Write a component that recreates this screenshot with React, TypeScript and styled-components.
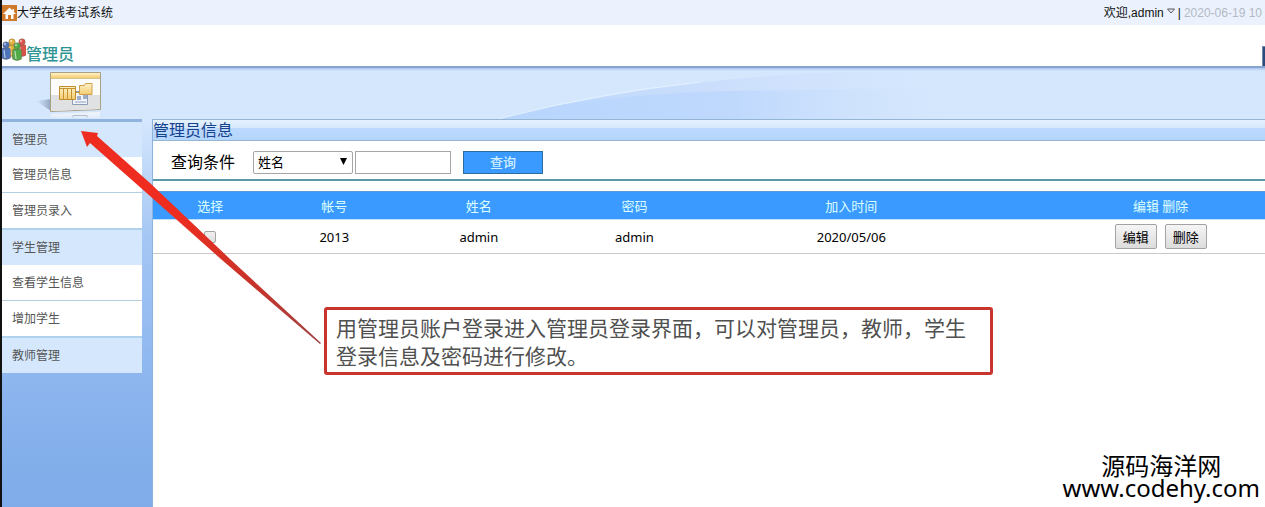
import React from "react";
import styled, { createGlobalStyle, css } from "styled-components";

const GlobalStyle = createGlobalStyle`
  *, *::before, *::after { box-sizing: border-box; }
  body {
    margin: 0;
    overflow: hidden;
    background: #fff;
    color: #111;
    font: 12px/16px "Liberation Sans", "Noto Sans CJK SC", sans-serif;
  }
  button, input, select { font-family: inherit; margin: 0; }
`;

const Page = styled.div`
  position: relative;
  display: flex;
  flex-direction: column;
  min-height: 100vh;
  overflow: hidden;
  border-left: 2px solid #111;
`;

const TitleBar = styled.header`
  display: flex;
  align-items: center;
  justify-content: space-between;
  height: 25px;
  background: #ebf2fd;
  white-space: nowrap;
`;

const Brand = styled.a`
  display: flex;
  align-items: center;
  color: #111;
  text-decoration: none;
`;

const Session = styled.div`
  display: flex;
  align-items: center;
  gap: 3px;
  padding-right: 3px;
`;

const Stamp = styled.time`
  color: #b4b9c4;
`;

const UserMenu = styled.button`
  display: flex;
  align-items: center;
  gap: 3px;
  padding: 0;
  border: 0;
  background: none;
  color: #111;
  font-size: 12px;
  line-height: 16px;
`;

const RoleBar = styled.div`
  display: flex;
  align-items: flex-end;
  justify-content: space-between;
  height: 41px;
  background: #fff;
`;

const RoleTitle = styled.h1`
  display: flex;
  align-items: flex-start;
  height: 28px;
  margin: 0;
  color: #2d9494;
  font-size: 16px;
  line-height: 34px;
  font-weight: 500;
`;

const RoleTab = styled.span`
  width: 3px;
  height: 20px;
  border: solid #7089ad;
  border-width: 1px 0 0 1px;
  background: #2c4a7c;
`;

const Banner = styled.div`
  display: flex;
  justify-content: space-between;
  height: 53px;
  border-top: 2px solid #88a3cf;
  background: linear-gradient(#a9c3ec, #d5e7fd 3px);
`;

const BannerIcon = styled.svg`
  flex: none;
  margin: 3px 0 0 34px;
`;

const Swoosh = styled.svg`
  flex: 1;
  min-width: 0;
  height: 51px;
`;

const Body = styled.div`
  display: flex;
  flex: 1;
`;

const Sidebar = styled.nav`
  flex: none;
  width: 150px;
  padding-right: 10px;
  background: linear-gradient(#d5e7fd, #a4c6f4 120px, #90b8f0 240px, #82aeea 340px, #80acea);
`;

type Line = "thick" | "medium" | "thin" | "none";

const menuLines: Record<Line, ReturnType<typeof css>> = {
  thick: css`height: 38px; border-top: 3px solid #91b4de; background: #d5e7fd;`,
  medium: css`height: 37px; border-top: 2px solid #b0d2ec; background: #d5e7fd;`,
  thin: css`height: 36px; border-top: 1px solid #b3cfe0; background: #fff;`,
  none: css`height: 35px; background: #fff;`,
};

const MenuLink = styled.a<{ $line: Line }>`
  display: flex;
  align-items: center;
  padding-left: 10px;
  color: #555;
  font-size: 12px;
  text-decoration: none;
  ${(p) => menuLines[p.$line]}
`;

const Main = styled.main`
  flex: 1;
  min-width: 0;
  border-left: 1px solid #8fb3dc;
  background: #fff;
`;

const PanelTitle = styled.h2`
  height: 22px;
  margin: 0;
  border: solid #94b6d2;
  border-width: 1px 0;
  background: linear-gradient(#e4f1fe, #d6e8fb 8px, #bcd8fd 8px, #b4d6fc);
  color: #16418c;
  font-size: 16px;
  line-height: 22px;
  font-weight: 400;
`;

const SearchForm = styled.form`
  display: flex;
  align-items: center;
  height: 40px;
  padding: 5px 0 0 18px;
  border-bottom: 2px solid #5a9aa8;
`;

const SearchLabel = styled.label`
  margin-right: 18px;
  color: #000;
  font-size: 16px;
`;

const SelectWrap = styled.span`
  position: relative;
  display: block;
  width: 100px;
  margin-right: 2px;
`;

const FieldSelect = styled.select`
  display: block;
  width: 100%;
  height: 23px;
  padding: 0 4px;
  border: 1px solid #a6a6a6;
  border-radius: 2px;
  appearance: none;
  background: #fff;
  color: #000;
  font-size: 13px;
`;

const SelectArrow = styled.svg`
  position: absolute;
  top: 7px;
  right: 6px;
  pointer-events: none;
`;

const Keyword = styled.input`
  width: 96px;
  height: 23px;
  margin-right: 12px;
  border: 1px solid #a6a6a6;
  background: #fff;
`;

const SearchButton = styled.button`
  width: 80px;
  height: 23px;
  padding: 0;
  border: 1px solid #2b6d9c;
  background: #3b9aff;
  color: #d0f0ff;
  font-size: 13px;
  line-height: 20px;
  font-weight: 500;
`;

const Table = styled.table`
  width: 100%;
  margin-top: 10px;
  border-collapse: collapse;
  table-layout: fixed;
  color: #000;
  font: 13px/20px "Noto Sans", "Noto Sans CJK SC", sans-serif;
  text-align: center;

  th:last-child, td:last-child { padding-left: 66px; }
`;

const HeadCell = styled.th`
  height: 28px;
  padding: 0;
  border-top: 1px solid #5c9bdc;
  border-bottom: 1px solid #bfe2f8;
  background: #3b9aff;
  color: #dcffff;
  font-weight: 400;
`;

const Cell = styled.td`
  height: 34px;
  padding: 0;
  border-bottom: 1px solid #c9c9c9;
`;

const RowCheck = styled.input`
  display: block;
  width: 12px;
  height: 12px;
  margin: 0 auto;
  border: 1px solid #a4a4a4;
  border-radius: 2px;
  appearance: none;
  background: linear-gradient(#f0f0f0, #dedede);
`;

const Actions = styled.div`
  display: flex;
  justify-content: center;
  gap: 8px;
`;

const RowButton = styled.button`
  width: 42px;
  height: 25px;
  padding: 0;
  border: 1px solid #a3a3a3;
  border-radius: 2px;
  background: linear-gradient(#f5f5f5, #dcdcdc);
  color: #000;
  font-size: 13px;
  line-height: 20px;
`;

const Note = styled.aside`
  position: absolute;
  top: 307px;
  left: 322px;
  width: 669px;
  padding: 3px 9px;
  border: 3px solid #c8352f;
  border-radius: 3px;
  background: #fff;
  color: #505050;
  font: 21px/28px "Noto Sans CJK SC", sans-serif;
`;

const Arrow = styled.svg`
  position: absolute;
  top: 120px;
  left: 68px;
  pointer-events: none;
`;

const Watermark = styled.div`
  position: absolute;
  right: 5px;
  bottom: 8px;
  display: flex;
  flex-direction: column;
  align-items: center;
  color: #000;
  font: 24px/22px "Noto Sans", "Noto Sans CJK SC", sans-serif;
`;

const HomeIcon = () => (
  <svg width="15" height="16" viewBox="0 0 15 16" aria-hidden="true">
    <rect width="15" height="16" fill="#cf792b" />
    <path d="M7.500 2.500 1 9h2.500v5h2.500v-4h3v4h2.500V9H14l-2-2V4h-1.500v1.500z" fill="#fff" />
  </svg>
);

const people = [
  { x: 10, y: 4, color: "#e5b23b" },
  { x: 20, y: 4, color: "#d9534b" },
  { x: 4, y: 7, color: "#4d73b8" },
  { x: 15, y: 8, color: "#50aa46" },
];

const PeopleIcon = () => (
  <svg width="24" height="24" viewBox="0 0 24 24" aria-hidden="true">
    {people.map((p) => (
      <g key={p.color} fill={p.color} stroke="#6c5a4c" strokeWidth=".4">
        <path d={`M${p.x - 3} ${p.y + 3}h6q1.500 0 1.500 2v8q-4.500 3-9 0v-8q0-2 1.500-2z`} />
        <circle cx={p.x} cy={p.y} r="3.200" />
        <circle cx={p.x - 1} cy={p.y - 1} r="1.200" fill="#fff" fillOpacity=".5" stroke="none" />
        <path d={`M${p.x - 2} ${p.y + 5}l1 8`} stroke="#fff" strokeOpacity=".6" strokeWidth="1.300" />
      </g>
    ))}
  </svg>
);

const menu: { text: string; line: Line }[] = [
  { text: "管理员", line: "thick" },
  { text: "管理员信息", line: "none" },
  { text: "管理员录入", line: "thin" },
  { text: "学生管理", line: "medium" },
  { text: "查看学生信息", line: "none" },
  { text: "增加学生", line: "thin" },
  { text: "教师管理", line: "medium" },
];

export default function App() {
  return (
    <>
      <GlobalStyle />
      <Page>
        <TitleBar>
          <Brand href="#home"><HomeIcon />大学在线考试系统</Brand>
          <Session>
            <UserMenu type="button">
              欢迎,admin
              <svg width="8" height="10" viewBox="0 0 8 10" aria-hidden="true"><path d="M.5 1h7L4 5z" fill="none" stroke="#555" /></svg>
            </UserMenu>
            <span>|</span>
            <Stamp>2020-06-19 10</Stamp>
          </Session>
        </TitleBar>
        <RoleBar>
          <RoleTitle><PeopleIcon />管理员</RoleTitle>
          <RoleTab />
        </RoleBar>
        <Banner>
          <BannerIcon width="68" height="48" viewBox="0 0 68 48" aria-hidden="true">
            <defs>
              <linearGradient id="gold" x1="0" y1="0" x2="0" y2="1"><stop stopColor="#fff3c9" /><stop offset="1" stopColor="#f2cb70" /></linearGradient>
              <linearGradient id="fade" x1="0" y1="0" x2="0" y2="1"><stop stopColor="#f4f6f8" /><stop offset="1" stopColor="#f4f6f8" stopOpacity=".3" /></linearGradient>
              <linearGradient id="shade"><stop stopColor="#9fb5cf" stopOpacity="0" /><stop offset="1" stopColor="#8fa5c0" /></linearGradient>
            </defs>
            <path d="M0 30 15 40V28z" fill="url(#shade)" />
            <path d="M14.500 1.500h50v37l-50 2z" fill="#fcfcfb" stroke="#a99f83" />
            <path d="M15 24h49v14l-49 2z" fill="#dfe1e3" />
            <path d="M15 2h49v5H15z" fill="url(#gold)" />
            <path d="M15 7.500h49" stroke="#d9c48b" />
            <path d="M36.500 20.500h15v13h-15z" fill="#f1f5fb" stroke="#8d9db5" />
            <path d="M41 25h4v4h-4zm6-1h4v4h-4z" fill="#9dafc8" />
            <path d="M39 31h11" stroke="#8fa3c2" />
            <path d="M23.500 15.500h16v13h-16z" fill="url(#gold)" stroke="#c18b29" />
            <path d="M23 17.500h17M27.500 18v11M31.500 18v11M35.500 18v11M40 21.500h4" fill="none" stroke="#c6922f" />
            <path d="M43.500 14.500h5l1-2h6.500v11h-12.500z" fill="url(#gold)" stroke="#cda04a" />
            <path d="M15 43l49-2v6H15z" fill="url(#fade)" />
            <path d="M37 46.500v-2h14v2" fill="none" stroke="#b4bfcd" />
          </BannerIcon>
          <Swoosh viewBox="104 0 1161 50" preserveAspectRatio="none" aria-hidden="true">
            <defs>
              <linearGradient id="outer"><stop stopColor="#bbd6fb" /><stop offset=".6" stopColor="#cfe1fc" /><stop offset="1" stopColor="#d5e7fd" stopOpacity="0" /></linearGradient>
              <linearGradient id="inner"><stop stopColor="#b8d5fc" /><stop offset=".5" stopColor="#bfd9fd" /><stop offset="1" stopColor="#d5e7fd" stopOpacity="0" /></linearGradient>
            </defs>
            <path d="M500 50Q640 14 817 5Q900 3 970 3V50z" fill="url(#outer)" />
            <path d="M500 50Q590 23 780 22Q900 18 970 25V50z" fill="url(#inner)" />
            <path d="M498 50Q600 24 700 14" fill="none" stroke="#e3f1ff" />
          </Swoosh>
        </Banner>
        <Body>
          <Sidebar>
            {menu.map((m) => (
              <MenuLink key={m.text} href="#menu" $line={m.line}>{m.text}</MenuLink>
            ))}
          </Sidebar>
          <Main>
            <PanelTitle>管理员信息</PanelTitle>
            <SearchForm onSubmit={(e) => e.preventDefault()}>
              <SearchLabel htmlFor="field">查询条件</SearchLabel>
              <SelectWrap>
                <FieldSelect id="field"><option>姓名</option></FieldSelect>
                <SelectArrow width="7" height="7" viewBox="0 0 7 7" aria-hidden="true"><path d="M0 0h7L3.500 7z" /></SelectArrow>
              </SelectWrap>
              <Keyword type="text" aria-label="关键字" />
              <SearchButton type="submit">查询</SearchButton>
            </SearchForm>
            <Table>
              <colgroup>
                <col style={{ width: "10.300%" }} />
                <col style={{ width: "12%" }} />
                <col style={{ width: "14%" }} />
                <col style={{ width: "14%" }} />
                <col style={{ width: "25%" }} />
                <col />
              </colgroup>
              <thead>
                <tr>
                  {["选择", "帐号", "姓名", "密码", "加入时间", "编辑 删除"].map((h) => <HeadCell key={h} scope="col">{h}</HeadCell>)}
                </tr>
              </thead>
              <tbody>
                <tr>
                  <Cell><RowCheck type="checkbox" aria-label="选择" /></Cell>
                  <Cell>2013</Cell>
                  <Cell>admin</Cell>
                  <Cell>admin</Cell>
                  <Cell>2020/05/06</Cell>
                  <Cell>
                    <Actions>
                      <RowButton type="button">编辑</RowButton>
                      <RowButton type="button">删除</RowButton>
                    </Actions>
                  </Cell>
                </tr>
              </tbody>
            </Table>
          </Main>
        </Body>
        <Arrow width="254" height="226" viewBox="70 120 254 226" aria-hidden="true">
          <defs>
            <linearGradient id="arrow" x1="80" y1="130" x2="322" y2="344" gradientUnits="userSpaceOnUse"><stop offset=".4" stopColor="#ee2d20" /><stop offset=".7" stopColor="#c93329" /><stop offset="1" stopColor="#a04444" /></linearGradient>
          </defs>
          <path d="M81 131 98 133 97 136 150 183 230 259 321 343 320 344 222 260 150 196 90 143 87 147z" fill="url(#arrow)" />
        </Arrow>
        <Note>用管理员账户登录进入管理员登录界面，可以对管理员，教师，学生登录信息及密码进行修改。</Note>
        <Watermark><span>源码海洋网</span><span>www.codehy.com</span></Watermark>
      </Page>
    </>
  );
}
